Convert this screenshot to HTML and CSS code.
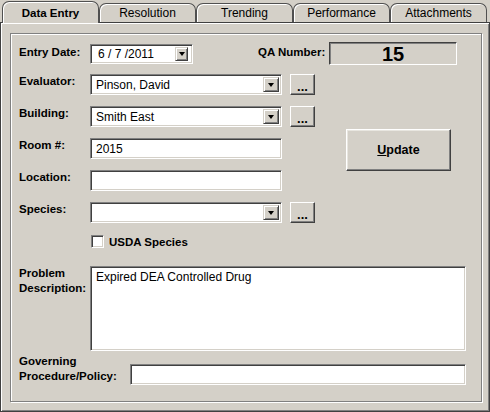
FILE: index.html
```html
<!DOCTYPE html>
<html lang="en">
<head>
  <meta charset="UTF-8" />
  <title>QA Entry</title>
  <link rel="stylesheet" href="styles.css">
</head>
<body>

  <div class="window">

    <div class="tab-bar">
      <div class="tab active">Data Entry</div>
      <div class="tab">Resolution</div>
      <div class="tab">Trending</div>
      <div class="tab">Performance</div>
      <div class="tab">Attachments</div>
    </div>

    <div class="tab-page">
      <div class="group">

        <div class="date-row">
          <label class="lbl">Entry Date:</label>
          <div class="field date-field">
            <span class="value">6 / 7 /2011</span>
            <span class="drop small"></span>
          </div>
          <label class="lbl qa-lbl">QA Number:</label>
          <div class="qa-box">15</div>
        </div>

        <div class="fields">
          <label class="lbl">Evaluator:</label>
          <div class="field combo"><span class="value">Pinson, David</span><span class="drop"></span></div>
          <button class="more">...</button>

          <label class="lbl">Building:</label>
          <div class="field combo"><span class="value">Smith East</span><span class="drop"></span></div>
          <button class="more">...</button>

          <label class="lbl">Room #:</label>
          <div class="field"><span class="value">2015</span></div>

          <label class="lbl">Location:</label>
          <div class="field"><span class="value"></span></div>

          <label class="lbl">Species:</label>
          <div class="field combo"><span class="value"></span><span class="drop"></span></div>
          <button class="more">...</button>

          <button class="update"><u>U</u>pdate</button>
        </div>

        <div class="check-row">
          <span class="checkbox"></span>
          <span class="check-lbl">USDA Species</span>
        </div>

        <div class="problem-row">
          <label class="lbl">Problem Description:</label>
          <div class="field memo"><span class="value">Expired DEA Controlled Drug</span></div>
        </div>

        <div class="policy-row">
          <label class="lbl">Governing Procedure/Policy:</label>
          <div class="field"><span class="value"></span></div>
        </div>

      </div>
    </div>

  </div>

</body>
</html>
```

FILE: styles.css
```css
* {
  box-sizing: border-box;
}

body {
  margin: 0;
  background: #d4d0c8;
  font-family: "Liberation Sans", Arial, sans-serif;
  font-size: 11.5px;
  color: #000;
}

.window {
  width: 490px;
  height: 412px;
  display: flex;
  flex-direction: column;
  background: #d4d0c8;
}

/* tabs */
.tab-bar {
  display: flex;
  align-items: flex-end;
  height: 22px;
  padding-left: 2px;
}

.tab {
  width: 97px;
  height: 19px;
  border: 1px solid #505050;
  border-bottom: none;
  border-radius: 7px 7px 0 0;
  box-shadow: inset 1px 1px #fff;
  text-align: center;
  font-size: 12px;
  line-height: 18px;
  background: #d4d0c8;
}

.tab.active {
  height: 22px;
  margin-bottom: -1px;
  position: relative;
  z-index: 1;
  font-weight: bold;
  font-size: 11.5px;
  line-height: 22px;
}

.tab-page {
  flex: 1;
  display: flex;
  border: 1px solid #404040;
  box-shadow: inset 1px 1px #fff, inset -1px -1px #808080;
  padding: 10px 7px 9px 9px;
}

.group {
  flex: 1;
  border: 1px solid #808080;
  box-shadow: inset 1px 1px #fff, 1px 1px #fff;
  padding: 8px 15px 0 8px;
}

.lbl {
  font-weight: bold;
  white-space: nowrap;
}

/* sunken edit box */
.field {
  display: flex;
  align-items: center;
  height: 21px;
  background: #fff;
  border: 1px solid;
  border-color: #808080 #fff #fff #808080;
  box-shadow: inset 1px 1px #404040, inset -1px -1px #d4d0c8;
  padding: 2px;
}

.field .value {
  flex: 1;
  padding-left: 3px;
  font-size: 12px;
  white-space: nowrap;
}

.drop {
  align-self: stretch;
  width: 16px;
  border: 1px solid;
  border-color: #d4d0c8 #404040 #404040 #d4d0c8;
  box-shadow: inset 1px 1px #fff, inset -1px -1px #808080;
  background: #d4d0c8;
  display: flex;
  align-items: center;
  justify-content: center;
}

.drop::after {
  content: "";
  border-top: 4px solid #000;
  border-left: 3.5px solid transparent;
  border-right: 3.5px solid transparent;
}

.drop.small {
  align-self: center;
  width: 13px;
  height: 14px;
  margin-right: 2px;
}

/* first row */
.date-row {
  display: flex;
  align-items: center;
  height: 23px;
}

.date-row > .lbl {
  width: 71px;
  margin-top: -3px;
}

.date-field {
  width: 103px;
  height: 20px;
}

.date-field .value {
  padding-left: 5px;
}

.qa-lbl {
  margin-left: 65px;
  width: 72px;
}

.qa-box {
  width: 128px;
  height: 23px;
  border: 1px solid;
  border-color: #404040 #fff #fff #404040;
  box-shadow: inset 1px 1px #808080;
  text-align: center;
  font-weight: bold;
  font-size: 20px;
  line-height: 22px;
}

/* main grid */
.fields {
  display: grid;
  grid-template-columns: 71px 192px 33px 1fr;
  grid-auto-rows: 21px;
  row-gap: 11px;
  margin-top: 9px;
  align-items: center;
}

.fields .lbl {
  grid-column: 1;
  align-self: start;
  line-height: 15px;
}

.fields .field {
  grid-column: 2;
}

.more {
  grid-column: 3;
  justify-self: end;
  width: 25px;
  height: 21px;
  padding: 0 0 3px;
  background: #d4d0c8;
  border: 1px solid;
  border-color: #fff #404040 #404040 #fff;
  box-shadow: inset -1px -1px #808080;
  font-family: inherit;
  font-weight: bold;
  font-size: 13px;
  display: flex;
  align-items: flex-end;
  justify-content: center;
  line-height: 8px;
}

.update {
  grid-column: 4;
  grid-row: 2 / span 3;
  align-self: center;
  margin-left: 31px;
  margin-top: 2px;
  width: 105px;
  height: 42px;
  background: #d4d0c8;
  border: 1px solid;
  border-color: #fff #404040 #404040 #fff;
  box-shadow: inset -1px -1px #808080, inset 1px 1px #e8e6e0;
  font-family: inherit;
  font-weight: bold;
  font-size: 12.5px;
}

/* checkbox */
.check-row {
  display: flex;
  align-items: center;
  margin-top: 12px;
  margin-left: 72px;
  height: 13px;
}

.checkbox {
  width: 13px;
  height: 13px;
  background: #fff;
  border: 1px solid;
  border-color: #808080 #fff #fff #808080;
  box-shadow: inset 1px 1px #404040, inset -1px -1px #d4d0c8;
}

.check-lbl {
  margin-left: 5px;
  font-weight: bold;
}

/* bottom rows */
.problem-row {
  display: flex;
  align-items: flex-start;
  margin-top: 18px;
}

.problem-row .lbl,
.policy-row .lbl {
  white-space: normal;
  line-height: 15px;
}

.problem-row .lbl {
  width: 71px;
}

.memo {
  flex: 1;
  height: 85px;
  align-items: flex-start;
  padding-top: 3px;
}

.policy-row {
  display: flex;
  align-items: flex-end;
  margin-top: 3px;
}

.policy-row .lbl {
  width: 111px;
  padding-bottom: 1px;
}

.policy-row .field {
  flex: 1;
}
```
